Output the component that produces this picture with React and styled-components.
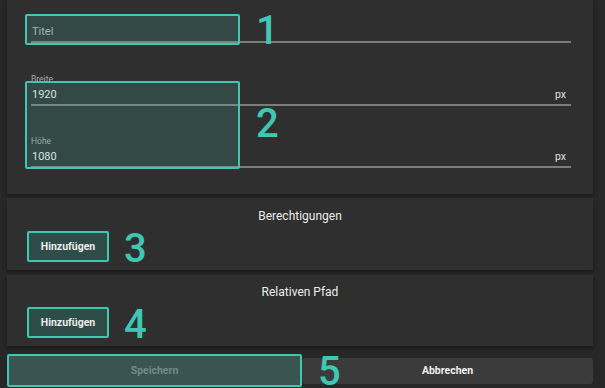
import React from "react";
import styled, { createGlobalStyle } from "styled-components";

const GlobalStyle = createGlobalStyle`
  html, body {
    margin: 0;
    padding: 0;
    background: #272727;
    font-family: Roboto, "Liberation Sans", sans-serif;
  }
`;

const Page = styled.div`
  width: 605px;
  height: 388px;
  overflow: hidden;
  padding: 0 12px 0 7px;
  box-sizing: border-box;
  display: flex;
  flex-direction: column;
`;

const Card = styled.div`
  position: relative;
  background: #2f2f2f;
  box-shadow: 0 2px 3px rgba(0, 0, 0, 0.35);
  padding: ${(p) => p.$pad};
  margin-bottom: ${(p) => p.$gap || 0}px;
  display: flex;
  flex-direction: column;
`;

const FormCard = styled(Card)`
  height: 194px;
  box-sizing: border-box;
`;

const Field = styled.div`
  display: flex;
  flex-direction: column;
  margin-top: ${(p) => p.$top || 0}px;
`;

const Label = styled.div`
  font-size: 8.5px;
  line-height: 10px;
  color: #a9a9a9;
`;

const InputRow = styled.div`
  display: flex;
  align-items: center;
  justify-content: space-between;
  height: 20px;
  border-bottom: 2px solid #7c7c7c;
  padding: 0 5px 0 1px;
  font-size: 11px;
  color: ${(p) => (p.$placeholder ? "#b4b4b4" : "#ececec")};
`;

const Suffix = styled.span`
  color: #e0e0e0;
  font-size: 10.5px;
`;

const Highlight = styled.div`
  position: absolute;
  left: 18px;
  top: ${(p) => p.$top}px;
  width: 215px;
  height: ${(p) => p.$h}px;
  box-sizing: border-box;
  border: 2px solid #3fc7b3;
  border-radius: 2px;
  background: rgba(63, 199, 179, 0.17);
  pointer-events: none;
`;

const Marker = styled.span`
  position: absolute;
  left: ${(p) => p.$left}px;
  top: ${(p) => p.$top}px;
  font-size: 40px;
  font-weight: 500;
  line-height: 30px;
  color: #3fc7b3;
  pointer-events: none;
`;

const SectionTitle = styled.div`
  text-align: center;
  font-size: 12px;
  line-height: 16px;
  color: #ececec;
  margin-bottom: 7px;
`;

const OutlineButton = styled.button`
  width: 82px;
  height: 31px;
  box-sizing: border-box;
  border: 2px solid #3fc7b3;
  border-radius: 2px;
  background: #2e4c48;
  color: #ececec;
  font-family: Roboto, "Liberation Sans", sans-serif;
  font-size: 10.5px;
  font-weight: 700;
  padding: 0;
`;

const Footer = styled.div`
  position: relative;
  display: flex;
  align-items: center;
  height: 33px;
  margin-top: 8px;
`;

const SaveButton = styled.button`
  flex: 1;
  height: 33px;
  box-sizing: border-box;
  border: 2px solid #3fc7b3;
  border-radius: 2px;
  background: #3a5551;
  color: #6f8c88;
  font-family: Roboto, "Liberation Sans", sans-serif;
  font-size: 10.5px;
  font-weight: 700;
`;

const CancelButton = styled.button`
  flex: 1;
  height: 26px;
  border: none;
  border-radius: 3px;
  background: #3b3b3b;
  color: #f0f0f0;
  font-family: Roboto, "Liberation Sans", sans-serif;
  font-size: 10.5px;
  font-weight: 700;
`;

const App = () => {
  return (
    <>
      <GlobalStyle />
      <Page>
        <FormCard $pad="21px 22px 0 24px" $gap={4}>
          <Field>
            <InputRow $placeholder>Titel</InputRow>
          </Field>
          <Field $top={31}>
            <Label>Breite</Label>
            <InputRow>
              1920<Suffix>px</Suffix>
            </InputRow>
          </Field>
          <Field $top={30}>
            <Label>Höhe</Label>
            <InputRow>
              1080<Suffix>px</Suffix>
            </InputRow>
          </Field>
          <Highlight $top={14} $h={31} />
          <Marker $left={249} $top={16}>1</Marker>
          <Highlight $top={81} $h={88} />
          <Marker $left={249} $top={109}>2</Marker>
        </FormCard>

        <Card $pad="10px 20px 8px" $gap={5}>
          <SectionTitle>Berechtigungen</SectionTitle>
          <OutlineButton>Hinzufügen</OutlineButton>
          <Marker $left={117} $top={36}>3</Marker>
        </Card>

        <Card $pad="9px 20px 8px">
          <SectionTitle>Relativen Pfad</SectionTitle>
          <OutlineButton>Hinzufügen</OutlineButton>
          <Marker $left={117} $top={35}>4</Marker>
        </Card>

        <Footer>
          <SaveButton disabled>Speichern</SaveButton>
          <CancelButton>Abbrechen</CancelButton>
          <Marker $left={311} $top={3}>5</Marker>
        </Footer>
      </Page>
    </>
  );
};

export default App;
